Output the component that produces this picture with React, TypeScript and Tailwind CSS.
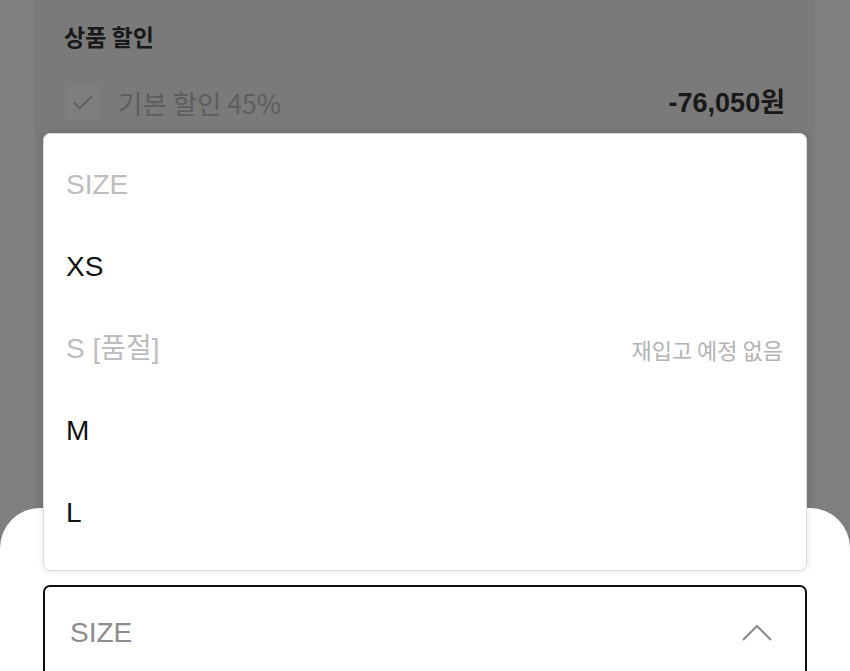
import { Check } from 'lucide-react'

const FONT = { fontFamily: '"Liberation Sans", "Noto Sans CJK KR", sans-serif' }
const KR = { fontFamily: '"Noto Sans CJK KR", sans-serif' }

const SIZES: { label: string; soldOut?: boolean; note?: string }[] = [
  { label: 'XS' },
  { label: 'S [품절]', soldOut: true, note: '재입고 예정 없음' },
  { label: 'M' },
  { label: 'L' },
]

export default function App() {
  return (
    <div className="relative w-[850px] h-[671px] overflow-hidden bg-white" style={FONT}>
      {/* Page underneath */}
      <div className="flex h-full px-[35px]">
        <div className="flex-1 bg-[#f4f4f4] px-[29px] pt-[19px]">
          <h3 className="text-[23px] font-bold text-[#333] leading-[34px]" style={KR}>
            상품 할인
          </h3>
          <div className="flex items-center justify-between mt-[32px]">
            <div className="flex items-center gap-[18px]">
              <span className="w-[34px] h-[34px] bg-[#fafafa] flex items-center justify-center ml-[2px]">
                <Check className="w-[26px] h-[26px] text-[#bbb]" strokeWidth={1.6} />
              </span>
              <span className="text-[26.5px] text-[#bcbcbc] leading-[36px]" style={KR}>
                기본 할인 45%
              </span>
            </div>
            <span className="text-[27px] font-bold text-[#333] pr-[1px] leading-[36px]">-76,050원</span>
          </div>
        </div>
      </div>

      {/* Dim overlay */}
      <div className="absolute inset-0 bg-black/50" />

      {/* Bottom sheet */}
      <div className="absolute left-0 right-0 top-[508px] bottom-0 bg-white rounded-t-[40px] px-[43px] pt-[77px]">
        <div className="h-[96px] border-2 border-[#111] rounded-[7px] flex items-center justify-between pl-[25px] pr-[32px]">
          <span className="text-[28px] text-[#8c8c8c]">SIZE</span>
          <svg width="32" height="20" viewBox="0 0 32 20" fill="none">
            <path d="M2 17 L16 3 L30 17" stroke="#8a8a8a" strokeWidth="2" />
          </svg>
        </div>
      </div>

      {/* Dropdown list */}
      <div className="absolute left-[43px] top-[133px] w-[764px] h-[438px] bg-white border border-[#dcdcdc] rounded-[7px] shadow-[0_0_6px_rgba(0,0,0,0.12)] pt-[10px] px-[22px]">
        <div className="h-[82px] flex items-center text-[28px] text-[#bdbdbd]">SIZE</div>
        {SIZES.map((s) => (
          <div key={s.label} className="h-[82px] flex items-center justify-between">
            <span className={`text-[28px] ${s.soldOut ? 'text-[#bdbdbd]' : 'text-[#111]'}`}>{s.label}</span>
            {s.note && (
              <span className="text-[22px] text-[#b3b3b3] pr-[1px]" style={KR}>
                {s.note}
              </span>
            )}
          </div>
        ))}
      </div>
    </div>
  )
}
